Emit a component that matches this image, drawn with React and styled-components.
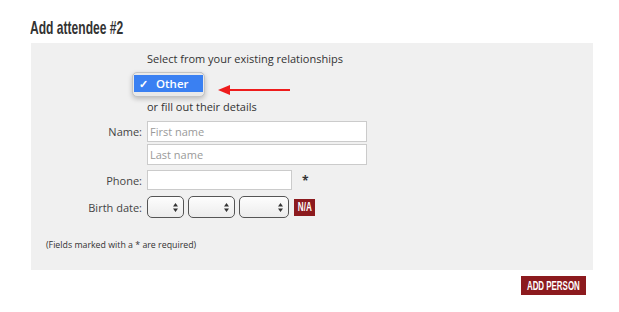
import React from 'react'
import styled, { createGlobalStyle } from 'styled-components'

const Global = createGlobalStyle`
  html, body { margin: 0; padding: 0; background: #fff; }
  body { font-family: "Open Sans", "DejaVu Sans", sans-serif; color: #333; }
  * { box-sizing: border-box; }
`

const Page = styled('div')`
  width: 619px;
  height: 312px;
  padding: 17px 26px 0 31px;
`

// no condensed display face installed, so squeeze a bold sans
const Squeeze = styled('span')`
  display: inline-block;
  transform: scaleX(${p => p.$x});
  transform-origin: ${p => p.$origin || 'center'};
  white-space: nowrap;
`

const Heading = styled('h2')`
  margin: 0 0 0 -1px;
  font-family: "Liberation Sans", Arial, sans-serif;
  font-weight: bold;
  font-size: 19px;
  line-height: 22px;
  height: 26px;
  color: #333;
`

const Panel = styled('div')`
  background: #f0f0f0;
  width: 562px;
  height: 227px;
  padding: 8px 0 0 0;
`

const Form = styled('div')`
  display: grid;
  grid-template-columns: 111px auto;
  column-gap: 5px;
  align-items: center;
  font-size: 11px;
`

const Label = styled('div')`
  text-align: right;
  color: #444;
  font-size: 11px;
  align-self: ${p => p.$top ? 'start' : 'center'};
  padding-top: ${p => p.$top ? '3px' : '0'};
`

const Note = styled('div')`
  grid-column: 2;
  line-height: 15px;
  margin-top: ${p => p.$mt || 0}px;
  color: #333;
`

const PickerRow = styled('div')`
  grid-column: 2;
  position: relative;
  height: 22px;
  margin-top: 6px;
`

const SelectStub = styled('div')`
  width: 57px;
  height: 22px;
  border-radius: 5px;
  background: #2c5fb8;
`

const Popup = styled('div')`
  position: absolute;
  left: -15px;
  top: 0;
  width: 73px;
  height: 25px;
  border-radius: 5px;
  background: #e9e9e9;
  border: 1px solid #c4c4c4;
  box-shadow: 0 2px 5px rgba(0, 0, 0, 0.22);
  padding: 2px 1px;
`

const Option = styled('div')`
  height: 17px;
  background: #3a80f2;
  color: #fff;
  display: flex;
  align-items: center;
  padding-left: 5px;
  gap: 8px;
  font-family: "Open Sans", sans-serif;
  font-weight: 600;
  font-size: 11.5px;
`

const Check = styled('span')`
  font-weight: bold;
  font-size: 11px;
`

const Arrow = styled('svg')`
  position: absolute;
  left: 71px;
  top: 12px;
`

const Stack = styled('div')`
  display: flex;
  flex-direction: column;
  gap: 2px;
`

const TextInput = styled('input')`
  width: ${p => p.$w}px;
  height: ${p => p.$h || 21}px;
  border: 1px solid #cbcbcb;
  background: #fff;
  padding: 0 2px;
  font-family: "Open Sans", sans-serif;
  font-size: 11px;
  outline: none;
  &::placeholder { color: #9a9a9a; }
`

const Row = styled('div')`
  display: flex;
  align-items: center;
  gap: ${p => p.$gap || 4}px;
`

const Star = styled('span')`
  margin-left: 6px;
  font-size: 12px;
  font-weight: bold;
  color: #333;
`

const FakeSelect = styled('div')`
  width: ${p => p.$w}px;
  height: 22px;
  border: 1px solid #555;
  border-radius: 5px;
  background: linear-gradient(#fdfdfd, #ececec);
  display: flex;
  align-items: center;
  justify-content: flex-end;
  padding-right: 5px;
`

const RedButton = styled('button')`
  width: ${p => p.$w}px;
  height: ${p => p.$h}px;
  padding: 0;
  border: 0;
  background: #8c1a1e;
  color: #fff;
  font-family: "Liberation Sans", Arial, sans-serif;
  font-weight: bold;
  font-size: ${p => p.$fs}px;
  display: flex;
  align-items: center;
  justify-content: center;
  overflow: hidden;
  margin-left: ${p => p.$ml || 0}px;
`

const Footnote = styled('div')`
  font-size: 8.8px;
  color: #333;
  padding: 21px 0 0 15px;
`

const Actions = styled('div')`
  display: flex;
  justify-content: flex-end;
  padding: 6px 7px 0 0;
`

const Spinner = () => (
  <svg width="5" height="9" viewBox="0 0 5 9">
    <path d="M2.5 0 L5 3.4 L0 3.4 Z M2.5 9 L5 5.6 L0 5.6 Z" fill="#333" />
  </svg>
)

export default function App() {
  return (
    <Page>
      <Global />
      <Heading><Squeeze $x={0.635} $origin="left">Add attendee #2</Squeeze></Heading>
      <Panel>
        <Form>
          <Note>Select from your existing relationships</Note>
          <PickerRow>
            <SelectStub />
            <Popup>
              <Option><Check>✓</Check><span>Other</span></Option>
            </Popup>
            <Arrow width="74" height="12" viewBox="0 0 74 12">
              <path d="M11 6 H72" stroke="#ee1c1c" strokeWidth="2" />
              <path d="M0 6 L12 1 L12 11 Z" fill="#ee1c1c" />
            </Arrow>
          </PickerRow>
          <Note $mt={5}>or fill out their details</Note>

          <Label $top style={{ marginTop: 7 }}>Name:</Label>
          <Stack style={{ marginTop: 7 }}>
            <TextInput $w={220} placeholder="First name" />
            <TextInput $w={220} placeholder="Last name" />
          </Stack>

          <Label style={{ marginTop: 5 }}>Phone:</Label>
          <Row style={{ marginTop: 5 }}>
            <TextInput $w={145} $h={20} />
            <Star>*</Star>
          </Row>

          <Label style={{ marginTop: 6 }}>Birth date:</Label>
          <Row style={{ marginTop: 6 }} $gap={4}>
            <FakeSelect $w={37}><Spinner /></FakeSelect>
            <FakeSelect $w={47}><Spinner /></FakeSelect>
            <FakeSelect $w={50}><Spinner /></FakeSelect>
            <RedButton $w={21} $h={17} $fs={12.5} $ml={1}>
              <Squeeze $x={0.65}>N/A</Squeeze>
            </RedButton>
          </Row>
        </Form>
        <Footnote>(Fields marked with a * are required)</Footnote>
      </Panel>
      <Actions>
        <RedButton $w={65} $h={19} $fs={13}>
          <Squeeze $x={0.61}>ADD PERSON</Squeeze>
        </RedButton>
      </Actions>
    </Page>
  )
}
